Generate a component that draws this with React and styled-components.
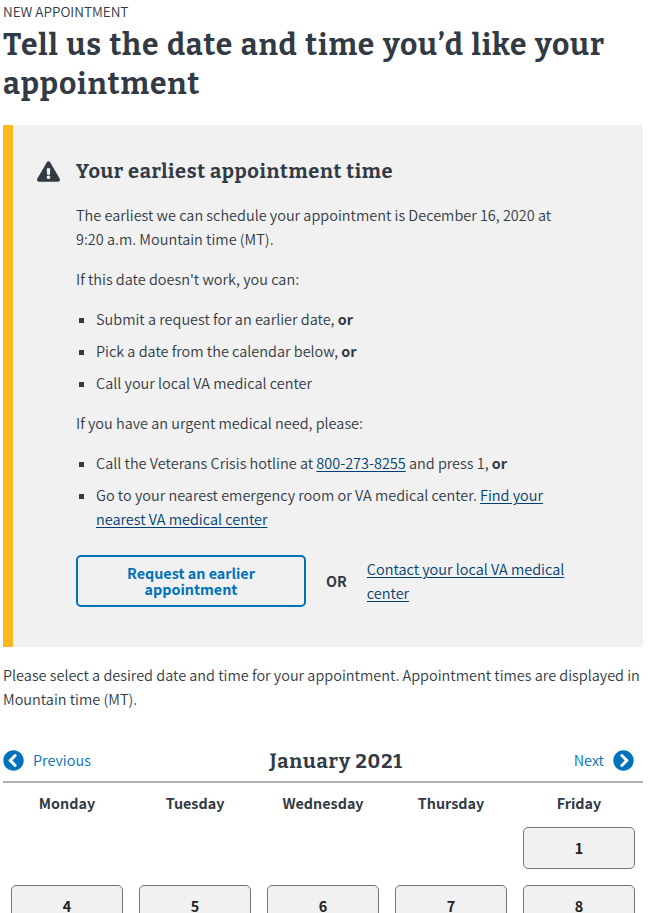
import React from "react";
import styled, { createGlobalStyle } from "styled-components";
import { FaExclamationTriangle, FaChevronCircleLeft, FaChevronCircleRight } from "react-icons/fa";

const GlobalStyle = createGlobalStyle`
  *, *::before, *::after { box-sizing: border-box; }
  html, body { margin: 0; background: #fff; }
  html { height: 100%; overflow: hidden; }
  body {
    height: 100%;
    overflow: hidden;
    color: #323a45;
    font-family: "Noto Sans CJK SC", "Open Sans", sans-serif;
    font-size: 14.48px;
    font-weight: 350;
    line-height: 24px;
  }
  b, strong { font-size: 14.33px; font-weight: 700; }
`;

const Page = styled.main`
  width: 648px;
  height: 913px;
  overflow: hidden;
  padding: 0 5px 0 3px;
`;

const Eyebrow = styled.div`
  height: 26px;
  font-size: 13.5px;
  line-height: 22px;
`;

const slab = `
  font-family: Bitter, "DejaVu Serif Condensed", "DejaVu Serif", serif;
  font-weight: 700;
  margin: 0;
`;

const Title = styled.h1`
  ${slab}
  font-size: 30px;
  line-height: 39px;
  letter-spacing: 0.87px;
  word-spacing: 1.4px;
  white-space: nowrap;
`;

const Alert = styled.section`
  display: flex;
  height: 522px;
  margin-top: 21px;
  padding: 33px 72px 0 23px;
  border-left: 10px solid #fdb81e;
  background: #f1f1f1;
`;

const AlertIcon = styled(FaExclamationTriangle)`
  flex: none;
  width: 23px;
  height: 21px;
  margin: 3px 16.5px 0 0.5px;
`;

const AlertBody = styled.div`
  flex: 1;
  min-width: 0;
`;

const AlertTitle = styled.h2`
  ${slab}
  font-size: 20px;
  line-height: 26px;
  letter-spacing: 0.63px;
  margin-bottom: 19px;
`;

const Text = styled.p`
  margin: 0 0 16px;
`;

const List = styled.ul`
  margin: 0 0 16px;
  padding: 0;
  list-style: none;
`;

const Item = styled.li`
  display: flex;
  margin-bottom: 8px;

  &::before {
    content: "";
    flex: none;
    width: 5px;
    height: 5px;
    margin: 11px 12px 0 3px;
    background: #323a45;
  }
`;

const Link = styled.a`
  color: #003e73;
  text-decoration: underline;
  text-decoration-thickness: 1px;
  text-underline-offset: 2px;
`;

const Actions = styled.div`
  display: flex;
  align-items: center;
  margin-top: 24px;
`;

const RequestButton = styled.button`
  flex: none;
  width: 230px;
  height: 52px;
  padding: 0 40px;
  border: 2px solid #0071bb;
  border-radius: 5px;
  background: transparent;
  color: #0071bb;
  font: inherit;
  font-size: 14.33px;
  font-weight: 700;
  line-height: 16px;
`;

const Or = styled.strong`
  margin: 0 20px;
`;

const Intro = styled.p`
  margin: 16px 0 36px;
  white-space: nowrap;
`;

const CalendarNav = styled.nav`
  display: flex;
  align-items: center;
  justify-content: space-between;
  height: 36px;
  padding-bottom: 8px;
  border-bottom: 2px solid #aeb0b5;
`;

const Month = styled.h2`
  ${slab}
  padding: 2px 0 0 8px;
  font-size: 20px;
  line-height: 26px;
  letter-spacing: 0.85px;
`;

const NavButton = styled.button`
  display: flex;
  align-items: center;
  gap: 9px;
  margin-right: ${({ $end }) => ($end ? "9px" : "0")};
  padding: 0;
  border: 0;
  background: none;
  color: #0071bb;
  font: inherit;

  svg { width: 21px; height: 21px; }
`;

const Weekdays = styled.div`
  display: grid;
  grid-template-columns: repeat(5, 128px);
  margin: 8px 0 12px;
  text-align: center;
  font-size: 14.33px;
  font-weight: 700;
`;

const Week = styled.div`
  display: grid;
  grid-template-columns: repeat(5, 128px);
  margin-bottom: 16px;
`;

const Day = styled.button`
  grid-column: ${({ $column }) => $column};
  height: 42px;
  margin: 0 8px;
  padding: 0;
  border: 1px solid #757575;
  border-radius: 5px;
  background: #f1f1f1;
  color: #212121;
  font: inherit;
  font-size: 14.33px;
  font-weight: 700;
`;

const weekdays = ["Monday", "Tuesday", "Wednesday", "Thursday", "Friday"];
const weeks = [
  [[5, 1]],
  [[1, 4], [2, 5], [3, 6], [4, 7], [5, 8]],
];

export default function App() {
  return (
    <Page>
      <GlobalStyle />
      <Eyebrow>NEW APPOINTMENT</Eyebrow>
      <Title>
        Tell us the date and time you’d like your
        <br />
        appointment
      </Title>
      <Alert>
        <AlertIcon />
        <AlertBody>
          <AlertTitle>Your earliest appointment time</AlertTitle>
          <Text>
            The earliest we can schedule your appointment is December 16, 2020 at
            <br />
            9:20 a.m. Mountain time (MT).
          </Text>
          <Text>If this date doesn't work, you can:</Text>
          <List>
            <Item><span>Submit a request for an earlier date, <b>or</b></span></Item>
            <Item><span>Pick a date from the calendar below, <b>or</b></span></Item>
            <Item><span>Call your local VA medical center</span></Item>
          </List>
          <Text>If you have an urgent medical need, please:</Text>
          <List>
            <Item>
              <span>Call the Veterans Crisis hotline at <Link>800-273-8255</Link> and press 1, <b>or</b></span>
            </Item>
            <Item>
              <span>
                Go to your nearest emergency room or VA medical center.{" "}
                <Link>Find your<br />nearest VA medical center</Link>
              </span>
            </Item>
          </List>
          <Actions>
            <RequestButton>Request an earlier appointment</RequestButton>
            <Or>OR</Or>
            <Link>Contact your local VA medical<br />center</Link>
          </Actions>
        </AlertBody>
      </Alert>
      <Intro>
        Please select a desired date and time for your appointment. Appointment times are displayed in
        <br />
        Mountain time (MT).
      </Intro>
      <CalendarNav>
        <NavButton><FaChevronCircleLeft />Previous</NavButton>
        <Month>January 2021</Month>
        <NavButton $end>Next<FaChevronCircleRight /></NavButton>
      </CalendarNav>
      <Weekdays>
        {weekdays.map((name) => <span key={name}>{name}</span>)}
      </Weekdays>
      {weeks.map((days) => (
        <Week key={days[0][1]}>
          {days.map(([column, day]) => <Day key={day} $column={column}>{day}</Day>)}
        </Week>
      ))}
    </Page>
  );
}
